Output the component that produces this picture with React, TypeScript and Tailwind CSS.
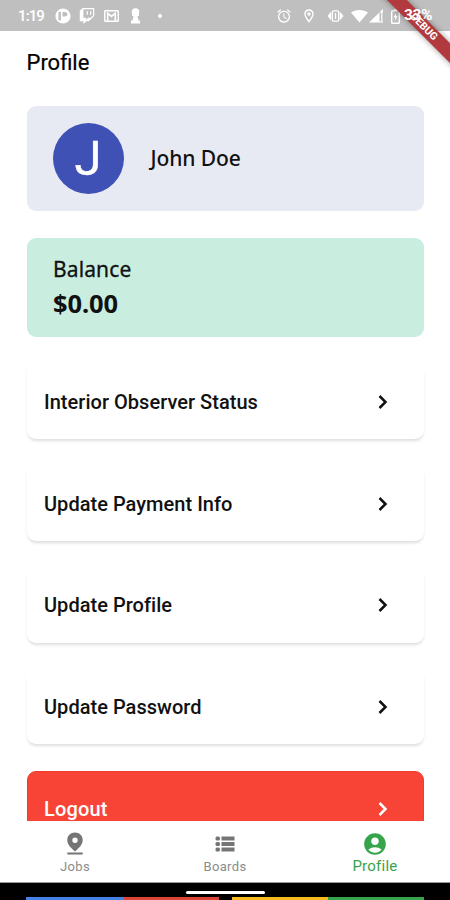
import React from "react";
import { MdAlarm, MdOutlineLocationOn, MdAccountCircle } from "react-icons/md";
import { FaTwitch } from "react-icons/fa";

function StatusBar() {
  return (
    <header className="flex h-[31px] shrink-0 items-center bg-[#bfbfbf] pt-px pl-[18px] text-white">
      <span className="w-[37px] font-[Roboto] text-[15px] leading-none font-medium tracking-[-0.9px]">1:19</span>
      <svg className="h-4 w-4 shrink-0" viewBox="0 0 16 16">
        <circle cx="8" cy="8" r="7.6" fill="white" />
        <path d="M4.700 3.800v8.500" fill="none" stroke="#bfbfbf" strokeWidth="2.400" />
        <path d="M7.500 4h2.500q2.500.2 2.500 2.200T10 8.500H7.500z" fill="#bfbfbf" />
      </svg>
      <FaTwitch className="ml-[8px] h-4 w-4 shrink-0" />
      <svg className="ml-[9px] h-3 w-[15px] shrink-0" viewBox="0 0 15 12">
        <rect x=".7" y=".7" width="13.6" height="10.6" rx="1" fill="none" stroke="white" strokeWidth="1.5" />
        <path d="M3.700 11V3.200l3.800 3.200 3.800-3.200V11" fill="none" stroke="white" strokeWidth="1.600" />
      </svg>
      <svg className="ml-[11px] h-4 w-[11px] shrink-0" viewBox="0 0 11 16">
        <circle cx="5.500" cy="4" r="3.800" fill="white" />
        <path d="M2 6h7v2H7.500l1 4.500H10V15.500H1V12.500h1.500L3.500 8H2z" fill="white" />
      </svg>
      <span className="ml-[17px] h-1 w-1 shrink-0 rounded-full bg-white" />
      <div className="ml-auto flex h-full items-center pr-[16px]">
        <MdAlarm className="h-4 w-4" />
        <MdOutlineLocationOn className="ml-[9px] h-4 w-4" />
        <svg className="ml-[10px] h-4 w-[17px]" viewBox="0 0 17 16">
          <path d="M4.200 3.500 0.500 8l3.700 4.500zM12.800 3.500l3.700 4.500-3.700 4.500z" fill="white" />
          <rect x="5.400" y="2.800" width="6.200" height="10.400" rx="1.300" fill="none" stroke="white" strokeWidth="1.300" />
          <path d="M8.500 5v6" stroke="white" strokeWidth="1.300" />
        </svg>
        <svg className="ml-[7px] h-[14px] w-[17px]" viewBox="0 0 17 14">
          <path d="M0 3.500C4.500 0 12.500 0 17 3.500L8.500 13.500z" fill="white" />
        </svg>
        <svg className="ml-px h-[14px] w-[15px]" viewBox="0 0 15 14">
          <path d="M0 13.500 14 0v3.500h-3.500v10z" fill="white" />
          <path d="M12.800 3v10.500M10 13h4" stroke="white" strokeWidth="1.200" />
        </svg>
        <svg className="ml-[7px] h-[15px] w-[9px]" viewBox="0 0 9 15">
          <path d="M3 0h3v1.500H3z" fill="white" />
          <rect x=".7" y="1.700" width="7.600" height="12.600" rx=".8" fill="none" stroke="white" strokeWidth="1.400" />
          <path d="m5.200 4.200-2.700 4h1.600v3.300l2.500-4.200H5z" fill="white" />
        </svg>
        <span className="relative z-10 ml-[4px] w-[30px] font-[Roboto] text-[15.500px] leading-none font-bold tracking-[-0.4px]">33%</span>
      </div>
    </header>
  );
}

function Chevron() {
  return (
    <svg className="h-4 w-[10px] shrink-0" viewBox="0 0 10 16">
      <path d="m1.500 2 6 6-6 6" fill="none" stroke="currentColor" strokeWidth="2.500" />
    </svg>
  );
}

function ActionRow({ label }: { label: string }) {
  return (
    <button className="flex h-[75.500px] w-full shrink-0 items-center justify-between rounded-[9px] bg-white pt-px pr-[36px] pl-[17.500px] text-[#111] shadow-[0_3px_3px_-1px_rgba(0,0,0,0.1),0_2px_4px_rgba(0,0,0,0.035)]">
      <span className="font-[Roboto] text-[20px] leading-6 font-medium tracking-[0.03px]">{label}</span>
      <Chevron />
    </button>
  );
}

function BottomNav() {
  return (
    <nav className="grid h-[62px] shrink-0 grid-cols-3 border-b border-[#999] bg-white font-[Roboto] text-[#757575]">
      <div className="flex flex-col items-center pt-[10px]">
        <svg className="h-[26px] w-[26px]" viewBox="0 0 26 26" fill="currentColor">
          <path fillRule="evenodd" d="M13 1.500c4.600 0 7.700 3.300 7.700 7.500 0 4.500-3.700 8-7.700 11.500C9 17 5.300 13.500 5.300 9 5.300 4.800 8.400 1.500 13 1.500zm0 5a2.700 2.700 0 1 0 0 5.400 2.700 2.700 0 0 0 0-5.400zM5.300 21.500h15.400v2H5.300z" />
        </svg>
        <span className="mt-px text-[13px] leading-[17px] tracking-[0.35px] text-[#8b8b8b]">Jobs</span>
      </div>
      <div className="flex flex-col items-center pt-[10px]">
        <svg className="h-[26px] w-[22px]" viewBox="0 0 22 26" fill="currentColor">
          <path d="M7.500 5.500h13v4h-13zM7.500 11h13v4h-13zM7.500 16.500h13v4h-13z" />
          <rect x="1.500" y="5.500" width="4.500" height="4" rx="1.500" />
          <rect x="1.500" y="11" width="4.500" height="4" rx="1.500" />
          <rect x="1.500" y="16.500" width="4.500" height="4" rx="1.500" />
        </svg>
        <span className="mt-px text-[13px] leading-[17px] tracking-[0.35px] text-[#8b8b8b]">Boards</span>
      </div>
      <div className="flex flex-col items-center pt-[9.500px] text-[#36a44a]">
        <MdAccountCircle className="h-[26px] w-[26px]" />
        <span className="mt-px text-[15px] leading-[17px] tracking-[0.25px]">Profile</span>
      </div>
    </nav>
  );
}

export default function App() {
  return (
    <div className="relative flex h-[900px] w-[450px] flex-col overflow-hidden bg-white">
      <StatusBar />
      <main className="flex h-[790px] shrink-0 flex-col overflow-hidden px-[26.500px] pt-[18.500px]">
        <h1 className="h-[56px] shrink-0 pt-px font-[Roboto] text-[22px] leading-6 font-normal text-black [-webkit-text-stroke:0.2px_black]">Profile</h1>
        <section className="flex h-[105.500px] shrink-0 items-center rounded-[9px] bg-[#e8eaf3] pl-[26px]">
          <div className="flex h-[71px] w-[71px] items-center justify-center rounded-full bg-[#3f51b5] font-[Roboto] text-[49px] leading-none text-white [-webkit-text-stroke:0.4px_white]">J</div>
          <span className="-mt-px ml-[27px] font-['Noto_Sans'] text-[21px] leading-7 font-medium tracking-[-0.1px] text-[#111]">John Doe</span>
        </section>
        <section className="mt-[26.500px] flex h-[99px] shrink-0 flex-col rounded-[9px] bg-[#c9eee0] pt-[15.500px] pl-[26.500px] font-['Noto_Sans'] text-[#111]">
          <span className="text-[21px] leading-[32px] tracking-[0.12px] [-webkit-text-stroke:0.3px_#111]">Balance</span>
          <strong className="text-[25.500px] leading-[36px] font-bold tracking-[-0.1px]">$0.00</strong>
        </section>
        <div className="mt-[27px] flex shrink-0 flex-col gap-[26.300px]">
          <ActionRow label="Interior Observer Status" />
          <ActionRow label="Update Payment Info" />
          <ActionRow label="Update Profile" />
          <ActionRow label="Update Password" />
          <button className="flex h-[75.500px] w-full items-center justify-between rounded-[9px] border border-[#f23b2d] bg-[#f74436] pt-px pr-[35px] pl-[16.500px] text-white">
            <span className="font-[Roboto] text-[20px] leading-6 font-medium tracking-[0.15px]">Logout</span>
            <Chevron />
          </button>
        </div>
      </main>
      <BottomNav />
      <footer className="flex h-[17px] shrink-0 flex-col items-center justify-between bg-black pt-[8px]">
        <div className="h-[3px] w-[79px] rounded-full bg-white" />
        <div className="flex h-[3px] w-full pl-[26px]">
          <div className="w-[98px] bg-[#4682e6]" />
          <div className="w-[95px] bg-[#dc4437]" />
          <div className="ml-[13px] w-[96px] bg-[#f8b91c]" />
          <div className="w-[96px] bg-[#36a44a]" />
        </div>
      </footer>
      <div className="absolute top-[20px] left-[364px] flex h-[13.500px] w-[120px] rotate-45 items-center justify-center bg-[#b23a3e] font-[Roboto] text-[10.500px] leading-none font-bold text-white shadow-[0_0_6px_rgba(0,0,0,0.4)]">
        <span>DEBUG</span>
      </div>
    </div>
  );
}
